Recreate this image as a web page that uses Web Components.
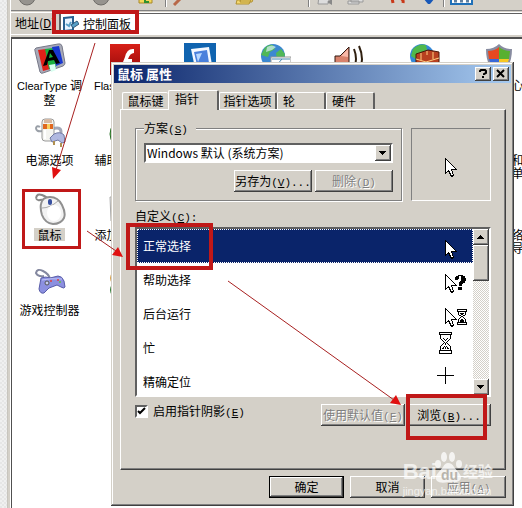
<!DOCTYPE html>
<html lang="zh-CN">
<head>
<meta charset="UTF-8">
<meta name="viewport" content="width=device-width, initial-scale=1">
<title>控制面板</title>
<style>
  body {
    margin: 0;
    background: #d4d0c8;
    color: #000;
    font: 12px/16px "Noto Sans CJK SC", sans-serif;
  }
</style>
</head>
<body>
<control-panel></control-panel>

<script>
const ICONS = {
  cleartype: `<path d="M2 5 24 1q3-1 4 2l3 17q0 2-2 3L9 30q-2 1-3-1L1 8q-1-2 1-3z" fill="#a8aab8" stroke="#777988"/><path d="M4 7l8-1 4 20-7 2z" fill="#e02018"/><path d="M11 6l8-1 3 19-7 2z" fill="#18b040"/><path d="M18 4l7-1 4 17-7 3z" fill="#1838d0"/><path d="M9 23 15 7h4l7 13-4 1-2-4-6 1-1 4zm6-8 4-1-3-4z" fill="#000" fill-rule="evenodd"/><path d="M15 22l6-1 1 6-5 2z" fill="#d8fff0"/>`,
  flash: `<defs><linearGradient id="f" x2="0" y2="1"><stop stop-color="#d82018"/><stop offset="1" stop-color="#900808"/></linearGradient></defs><rect x="1" y="1" width="30" height="31" fill="url(#f)"/><path d="M25 6q-7-1-9 8l-2 5q-2 6-5 6v4q6 0 9-9h5v-4h-4q2-6 6-6z" fill="#fff"/>`,
  display: `<rect y="0" width="32" height="32" fill="#1064b0"/><path d="M7 6l18-2 3 18-17 3z" fill="#f4f8ff"/><path d="M10 9l13-2 2 13-12 2z" fill="#4a80dc"/><path d="M12 11l6-1-4 9z" fill="#b8d8ff"/>`,
  globe: `<circle cx="14" cy="13" r="12" fill="#3c88d0"/><path d="M5 6q4-5 9-4l2 4-5 3-2 5-7-2zM17 10l5-4 4 5-2 8-6-2z" fill="#50b858"/><path d="M8 4q5-3 9 0l-4 3-6 2z" fill="#d8f0f8" opacity=".7"/><rect x="12" y="14" width="20" height="17" fill="#fff" stroke="#999"/><path d="M13 16h18M16 24l7-8" stroke="#4888b0"/>`,
  sound: `<path d="M1 13h5L15 4v26L6 22H1z" fill="#d8826c" stroke="#301810"/><path d="M7 13l7-7v8z" fill="#f8b8a8"/><path d="M20 6q4 10 0 20M25 3q6 13 0 27" fill="none" stroke="#302010" stroke-width="2"/>`,
  firewall: `<circle cx="13" cy="13" r="12" fill="#3488d8"/><path d="M4 6q6-6 13-4l1 5-7 3-3 7-6-4z" fill="#50b84c"/><path d="M7 11 19 7l11 2v18l-14 4-9-3z" fill="#b84020" stroke="#481808"/><path d="M7 16l10 3 13-4M7 22l10 3 13-4M12 10v7m5 2v6m7-16v7m-6-8v4" fill="none" stroke="#ffd080"/>`,
  shield: `<path d="M15 1q5 5 13 5 0 19-13 26Q2 25 2 6q8 0 13-5z" fill="#888ca0"/><path d="M15 4v12H5L4 8q7 0 11-4z" fill="#e84820"/><path d="M15 4q5 4 11 4l-1 8H15z" fill="#58b030"/><path d="M5 16h10v13Q7 24 5 16z" fill="#3868d8"/><path d="M15 16h10q-2 9-10 13z" fill="#f8c820"/>`,
  power: `<path d="M8 13q-6 1-6-3 1-3 4-1" fill="none" stroke="#9aa0a8" stroke-width="2"/><path d="M18 11q9-3 9 3 0 4-4 6" fill="none" stroke="#a4a8b8" stroke-width="3"/><rect x="8" y="1" width="12" height="22" rx="3" fill="#f4f4f0" stroke="#999"/><path d="M9 6h10v5H9z" fill="#e06820"/><path d="M13 6h3v5h-3z" fill="#f8d060"/><path d="M10 2q4-2 8 0v3h-8z" fill="#d8b8a0"/><path d="M11 12v9" stroke="#fff" stroke-width="2"/><path d="M16 20l4-4q6-3 10 1l1 7-3 1-4-3-6 2z" fill="#b0b8e0" stroke="#7078a0"/><path d="M20 23v4m7-2v4" stroke="#b09050" stroke-width="2"/>`,
  mouse: `<path d="M2 5q1-5 6-3t6 4M2 5q1 3 4 2t4 1" fill="none" stroke="#888" stroke-width="2"/><path d="M7 11q1-7 9-7 8 0 12 8 4 8 2 13-3 6-11 6-8-1-11-9-2-7-1-11z" fill="#f2f2f2" stroke="#909090" stroke-width="2"/><path d="M8 15q8 0 16-7" fill="none" stroke="#aaa"/><rect x="14" y="6" width="4" height="6" rx="2" fill="#3850a0"/><ellipse cx="20" cy="20" rx="7" ry="8" fill="#fff"/>`,
  gamepad: `<path d="M10 8Q4 9 2 5q1-5 7-2t7 8" fill="none" stroke="#8488a0" stroke-width="2"/><path d="M7 10q5-2 9 0l8-2q4 0 6 5l1 6q-1 2-4 0l-4-2-8 3-5 5q-4 1-5-4z" fill="#8c90e0" stroke="#585ca8"/><path d="M8 12q8-2 20-1" stroke="#c0c4f8" fill="none"/><circle cx="13" cy="15" r="2" fill="#c8ccf0" stroke="#555"/><circle cx="17" cy="13" r="1" fill="#e04040"/><circle cx="24" cy="12" r="1" fill="#e04040"/><circle cx="26" cy="14" r="1" fill="#60c040"/>`,
  access: `<circle cx="15" cy="16" r="14" fill="#60b050" stroke="#287028"/>`,
  printer: `<path d="M1 4h26v24H2z" fill="#eee" stroke="#aaa"/>`,
  phone: `<circle cx="8" cy="10" r="7" fill="#d8a048"/><circle cx="9" cy="22" r="8" fill="#308038"/>`,
  empty: ''
};

const ARROW = 'M.5 .5v15l3-3 3 6 2-1-2-6h5z';
const CURSORS = {
  normal: `<path transform="translate(8 11)" d="${ARROW}" fill="#fff" stroke="#000"/>`,
  help: `<path transform="translate(8 11)" d="${ARROW}" fill="#fff" stroke="#000"/><path d="M18 17v-3h1v-1h2v-1h5v1h2v2h1v3h-1v2h-2v1h-1v2h-3v-4h1v-1h1v-5h-2v3h-1v1h-2v-1zM21 24h4v3h-4z"/>`,
  work: `<path transform="translate(8 11)" d="${ARROW}" fill="#fff" stroke="#000"/><g transform="translate(20 12)"><path d="M.5 .5h9v2h-1v3l-3 2 3 3v3h1v2h-9v-2h1v-3l3-3-3-2v-3h-1z" fill="#fff" stroke="#000"/><path d="M3 4h4v1H6v1H4V5H3zM4 10h2v1h1v2H3v-2h1zM0 2h10v1H0zM0 13h10v1H0z"/></g>`,
  busy: `<g transform="translate(2 1)"><path d="M.5 .5h12v2h-1v4l-4 4 4 4v4h1v3H.5v-3h1v-4l4-4-4-4v-4h-1z" fill="#fff" stroke="#000"/><path d="M0 2h13v1H0zM0 18h13v1H0zM4 6h1v1h1v1h1V7h1V6h1v1H8v1H7v1H6V8H5V7H4zM6 11h1v2H6zM5 14h1v1H5zM7 14h1v1H7zM4 15h1v1H4zM6 15h1v1H6zM8 15h1v1H8zM3 16h2v1H3zM6 16h1v1H6zM8 16h2v1H8z"/></g>`,
  cross: `<path d="M0 10.500h17M8.500 2v17" stroke="#000"/>`
};

class DeskIcon extends HTMLElement {
  constructor() {
    super();
    this.attachShadow({ mode: 'open' });
  }

  connectedCallback() {
    this.shadowRoot.innerHTML = `
      <style>
        :host { display: block; min-width: 0; }
        a { display: flex; flex-direction: column; align-items: center; gap: 3px; color: inherit; text-decoration: none; text-align: center; line-height: 13px; }
        svg { width: 32px; height: 32px; }
        .label { padding: 0 3px; white-space: nowrap; }
        :host([selected]) .label { background: #d4d0c8; }
        ::slotted(span) { font-family: "Liberation Sans", sans-serif; font-size: 11px; }
      </style>
      <a href="#"><svg viewBox="0 0 32 32" aria-hidden="true">${ICONS[this.getAttribute('icon')]}</svg>
      <span class="label"><slot></slot></span></a>
    `;
  }
}

class ToolStrip extends HTMLElement {
  constructor() {
    super();
    this.attachShadow({ mode: 'open' });
    this.shadowRoot.innerHTML = `
      <style>
        :host { display: block; height: 10px; overflow: hidden; border-bottom: 1px solid #808080; }
        svg { display: block; width: 600px; height: 10px; }
      </style>
      <svg viewBox="0 0 600 10" aria-hidden="true">
        <g fill="#96938e" stroke="#6f6d69"><circle cx="16" cy="-3" r="8"/><circle cx="90" cy="-3" r="8"/></g>
        <path d="M11-2h9v2h-9zM86-2h9v2h-9z" fill="#ddd"/>
        <path d="M128-2h13v5H128z" fill="#f4d858" stroke="#a88828"/><path d="M134-2v4h4" fill="none" stroke="#309030" stroke-width="2"/>
        <path d="M154.500 0v7M297.500 0v7M432.500 0v7" stroke="#808080"/><path d="M155.500 0v7M298.500 0v7M433.500 0v7" stroke="#fff"/>
        <path d="M169-1l-6 6" stroke="#b86848" stroke-width="3"/>
        <path d="M226 0h14l-2 4h-13zM230-3h13l-2 5h-12z" fill="#f4d870" stroke="#b09030"/>
        <path d="M308-4h11l-2 8h-10zM340-3h12v5h-12zM337 1h11v3h-11z" fill="#ddd" stroke="#999"/><path d="M316 2l5-3v6z" fill="#888"/>
        <path d="M381-2l1 5M388-2q5 1 4 5" fill="none" stroke="#c83818" stroke-width="3"/>
        <path d="M412-2h12l-5 6h-2z" fill="#1858b8"/>
        <path d="M440-6h21V4h-21z" fill="#fff" stroke="#2070b8" stroke-width="2"/><path d="M443 1h3m3 0h3m3 0h3" stroke="#6080a0" stroke-width="3"/>
      </svg>
    `;
  }
}

class AddressBar extends HTMLElement {
  constructor() {
    super();
    this.attachShadow({ mode: 'open' });
    this.shadowRoot.innerHTML = `
      <style>
        :host { display: flex; align-items: stretch; height: 21px; margin-top: 1px; padding-left: 4px; border-top: 1px solid #fff; border-bottom: 1px solid #fff; }
        label { width: 44px; line-height: 20px; white-space: nowrap; }
        .field { flex: 1; display: flex; align-items: center; gap: 4px; padding-left: 2px; background: #fff; border-left: 2px solid #606060; border-top: 1px solid #606060; }
        svg { width: 16px; height: 16px; flex: none; }
        input { flex: 1; min-width: 0; border: 0; padding: 0; outline: 0; background: none; font: inherit; color: inherit; }
      </style>
      <label for="addr">地址(<u>D</u>)</label>
      <div class="field">
        <svg viewBox="0 0 16 16" aria-hidden="true"><path d="M1 2 10 1v13l-9 1z" fill="#e8f4ff" stroke="#286090" stroke-width="2"/><path d="M3 8l3 2 2-4" fill="none" stroke="#58a0c8" stroke-width="2"/><path d="M8 9l6-4 2 3-6 4z" fill="#58a0c8" stroke="#305878"/></svg>
        <input id="addr" value="控制面板">
      </div>
    `;
  }
}

class ClassicButton extends HTMLElement {
  constructor() {
    super();
    this.attachShadow({ mode: 'open' });
  }

  connectedCallback() {
    this.shadowRoot.innerHTML = `
      <style>
        :host { display: block; width: 75px; }
        button {
          display: block; width: 100%; height: 22px; padding: 0; border: 0;
          background: #d4d0c8; color: #000; font: inherit; line-height: 20px; white-space: nowrap;
          box-shadow: inset -1px -1px #404040, inset 1px 1px #fff, inset -2px -2px #808080;
        }
        button:disabled { color: #808080; text-shadow: 1px 1px #fff; }
        :host([default]) button { box-shadow: inset 0 0 0 1px #000, inset -2px -2px #404040, inset 2px 2px #fff, inset -3px -3px #808080; }
      </style>
      <button type="button" ${this.hasAttribute('disabled') ? 'disabled' : ''}><slot></slot></button>
    `;
  }
}

class CursorList extends HTMLElement {
  constructor() {
    super();
    this.attachShadow({ mode: 'open' });
    const rows = [['正常选择', 'normal'], ['帮助选择', 'help'], ['后台运行', 'work'], ['忙', 'busy'], ['精确定位', 'cross']];
    this.shadowRoot.innerHTML = `
      <style>
        :host { display: flex; box-sizing: border-box; height: 170px; overflow: hidden; background: #fff; border: 2px solid; border-color: #606060 #fff #fff #606060; }
        ul { flex: 1; margin: 0; padding: 0; list-style: none; }
        li { display: flex; align-items: center; justify-content: space-between; box-sizing: border-box; height: 34px; padding: 0 2px 0 6px; }
        li[aria-selected=true] { background: #0a246a; color: #fff; outline: 1px dotted #fff; outline-offset: -1px; }
        li svg { width: 34px; height: 34px; }
        .scroll { width: 16px; display: flex; flex-direction: column; background: repeating-conic-gradient(#fff 0 25%, #d4d0c8 0 50%) 0 0 / 2px 2px; }
        .scroll button, .thumb { width: 16px; padding: 0; border: 0; background: #d4d0c8; box-shadow: inset -1px -1px #404040, inset 1px 1px #fff, inset -2px -2px #808080; }
        .scroll button { height: 16px; flex: none; }
        .scroll button svg { display: block; width: 16px; height: 16px; }
        .thumb { height: 36px; }
        .down { margin-top: auto; }
      </style>
      <ul role="listbox" aria-label="自定义">
        ${rows.map(([name, cur], i) => `<li role="option" aria-selected="${i === 0}">${name}<svg viewBox="0 0 34 34" shape-rendering="crispEdges" aria-hidden="true">${CURSORS[cur]}</svg></li>`).join('')}
      </ul>
      <div class="scroll">
        <button type="button" aria-label="向上"><svg viewBox="0 0 16 16" shape-rendering="crispEdges"><path d="M4 10h7L7.500 6z"/></svg></button>
        <div class="thumb"></div>
        <button type="button" class="down" aria-label="向下"><svg viewBox="0 0 16 16" shape-rendering="crispEdges"><path d="M4 6h7L7.500 10z"/></svg></button>
      </div>
    `;
  }
}

class MouseDialog extends HTMLElement {
  constructor() {
    super();
    this.attachShadow({ mode: 'open' });
    this.shadowRoot.innerHTML = `
      <style>
        :host { display: block; padding: 3px; background: #d4d0c8; box-shadow: inset -1px -1px #404040, inset 1px 1px #d4d0c8, inset -2px -2px #808080, inset 2px 2px #fff; }
        header { display: flex; align-items: center; gap: 2px; height: 18px; padding: 0 2px; background: linear-gradient(90deg, #0a246a, #a6caf0); color: #fff; }
        h1 { flex: 1; margin: 0; padding-left: 1px; font-size: 13px; line-height: 18px; }
        header button { width: 16px; height: 14px; padding: 0; border: 0; background: #d4d0c8; box-shadow: inset -1px -1px #404040, inset 1px 1px #fff, inset -2px -2px #808080; }
        header svg { display: block; width: 16px; height: 14px; }
        .body { padding: 7px 5px 5px 6px; }
        nav { display: flex; align-items: flex-end; height: 19px; padding-left: 2px; }
        nav button { height: 17px; padding: 0; border: 0; border-top: 1px solid #fff; border-left: 1px solid #fff; border-right: 2px solid #606060; border-radius: 2px 2px 0 0; background: #d4d0c8; color: #000; font: inherit; line-height: 16px; white-space: nowrap; }
        nav .key { width: 46px; border-right: 0; }
        nav .opts { width: 58px; }
        nav .short { width: 49px; }
        nav .wheel { text-align: left; padding-left: 5px; }
        nav .hard { padding-right: 12px; }
        nav button[aria-selected=true] { position: relative; width: 51px; height: 20px; margin-bottom: -1px; padding: 0 12px 3px 0; }
        .page { padding: 10px 14px 43px; border: 1px solid; border-color: #fff #404040 #404040 #fff; box-shadow: inset -1px -1px #808080; }
        .scheme { display: flex; align-items: flex-end; gap: 9px; }
        fieldset { flex: 1; min-width: 0; margin: 0; padding: 7px 8px 8px; border: 1px solid #808080; box-shadow: inset 1px 1px #fff, 1px 1px #fff; }
        legend { height: 16px; padding: 0 8px 0 0; background: #d4d0c8; }
        .k { font: 11px/1 "Liberation Mono", monospace; }
        .combo { position: relative; }
        select { display: block; box-sizing: border-box; width: 100%; height: 20px; padding: 0 20px 0 1px; appearance: none; border: 2px solid; border-color: #606060 #fff #fff #606060; border-radius: 0; background: #fff; color: #000; font: inherit; line-height: 16px; }
        .drop { position: absolute; top: 2px; right: 2px; bottom: 2px; width: 16px; background: #d4d0c8; box-shadow: inset -1px -1px #404040, inset 1px 1px #fff, inset -2px -2px #808080; pointer-events: none; }
        .drop svg { display: block; width: 16px; height: 16px; }
        .pair { display: flex; justify-content: flex-end; gap: 3px; margin-top: 7px; }
        .pair classic-button { width: 78px; }
        .preview { box-sizing: border-box; width: 80px; height: 73px; display: grid; place-items: center; border: 1px solid; border-color: #808080 #fff #fff #808080; }
        .preview svg { width: 12px; height: 20px; padding: 6px 0 0; }
        .caption { margin: 7px 0 3px; }
        .opts-row { display: flex; align-items: flex-start; gap: 2px; margin-top: 7px; }
        .check { flex: 1; display: flex; align-items: center; gap: 5px; line-height: 13px; white-space: nowrap; }
        input { appearance: none; flex: none; width: 13px; height: 13px; margin: 0; border: 2px solid; border-color: #606060 #fff #fff #606060; background: #fff; }
        input:checked { background: #fff url('data:image/svg+xml,<svg xmlns="http://www.w3.org/2000/svg" viewBox="0 0 9 9"><path d="M1 4l2 2 5-5" fill="none" stroke="black" stroke-width="2"/></svg>') center / 9px 9px; }
        .opts-row classic-button { width: 84px; }
        footer { display: flex; justify-content: flex-end; gap: 6px; margin-top: 6px; }
      </style>
      <header>
        <h1>鼠标 属性</h1>
        <button type="button" aria-label="帮助"><svg viewBox="0 0 16 14"><path d="M5 5V4l1-1h4l1 1v2L9 7v1M8 9v2" fill="none" stroke="#000" stroke-width="2"/></svg></button>
        <button type="button" aria-label="关闭"><svg viewBox="0 0 16 14"><path d="M4 3l7 7M11 3l-7 7" stroke="#000" stroke-width="2"/></svg></button>
      </header>
      <div class="body">
        <nav role="tablist">
          <button type="button" role="tab" class="key">鼠标键</button>
          <button type="button" role="tab" aria-selected="true">指针</button>
          <button type="button" role="tab" class="opts">指针选项</button>
          <button type="button" role="tab" class="short wheel">轮</button>
          <button type="button" role="tab" class="short hard">硬件</button>
        </nav>
        <section class="page">
          <div class="scheme">
            <fieldset>
              <legend><label for="scheme">方案<span class="k">(<u>S</u>)</span></label></legend>
              <div class="combo">
                <select id="scheme"><option>Windows 默认 (系统方案)</option></select>
                <span class="drop"><svg viewBox="0 0 16 16" shape-rendering="crispEdges"><path d="M4 6h7L7.500 10z"/></svg></span>
              </div>
              <div class="pair">
                <classic-button>另存为<span class="k">(<u>V</u>)...</span></classic-button>
                <classic-button disabled>删除<span class="k">(<u>D</u>)</span></classic-button>
              </div>
            </fieldset>
            <div class="preview"><svg viewBox="0 0 12 20" shape-rendering="crispEdges"><path d="${ARROW}" fill="#fff" stroke="#000"/></svg></div>
          </div>
          <div class="caption">自定义<span class="k">(<u>C</u>):</span></div>
          <cursor-list></cursor-list>
          <div class="opts-row">
            <label class="check"><input type="checkbox" checked><span>启用指针阴影<span class="k">(<u>E</u>)</span></span></label>
            <classic-button disabled>使用默认值<span class="k">(<u>F</u>)</span></classic-button>
            <classic-button>浏览<span class="k">(<u>B</u>)...</span></classic-button>
          </div>
        </section>
        <footer>
          <classic-button default>确定</classic-button>
          <classic-button>取消</classic-button>
          <classic-button disabled>应用<span class="k">(<u>A</u>)</span></classic-button>
        </footer>
      </div>
    `;
  }
}

class SiteMark extends HTMLElement {
  constructor() {
    super();
    this.attachShadow({ mode: 'open' });
    this.shadowRoot.innerHTML = `
      <style>
        :host { display: block; color: rgba(255, 255, 255, .7); pointer-events: none; }
        .logo { display: flex; align-items: flex-end; height: 32px; font: bold 22px/24px "Liberation Sans", "Noto Sans CJK SC", sans-serif; }
        .paw { position: relative; width: 28px; height: 32px; margin-left: -2px; }
        .paw svg { display: block; width: 28px; height: 32px; }
        .paw span { position: absolute; left: 6px; bottom: 0; color: #b8b4ac; font-size: 14px; line-height: 18px; }
        .name { font-size: 15px; line-height: 24px; }
        .site { font: 11px/14px "Liberation Sans", sans-serif; }
      </style>
      <div class="logo">Bai<div class="paw"><svg viewBox="0 0 28 32" fill="#fff" fill-opacity=".75"><ellipse cx="3" cy="12" rx="3" ry="4"/><ellipse cx="9" cy="5" rx="3" ry="5"/><ellipse cx="17" cy="5" rx="3" ry="5"/><ellipse cx="24" cy="12" rx="3" ry="4"/><path d="M13 11q4 0 6 4l5 6q4 5 0 8-3 2-10 1-9 2-12-1-3-4 1-8l5-6q2-4 5-4z"/></svg><span>du</span></div><span class="name">经验</span></div>
      <div class="site">jingyan.baidu.com</div>
    `;
  }
}

class ControlPanel extends HTMLElement {
  constructor() {
    super();
    this.attachShadow({ mode: 'open' });
    this.shadowRoot.innerHTML = `
      <style>
        :host { display: flex; position: relative; height: 100vh; overflow: hidden; }
        .edge { flex: none; width: 7px; background: repeating-conic-gradient(#e6e6e6 0 25%, #f0f0f0 0 50%) 0 0 / 4px 4px; border-right: 1px solid #c8c5be; }
        .window { flex: 1; min-width: 0; display: flex; flex-direction: column; margin-left: 2px; border-left: 1px solid #fff; }
        .icons { flex: 1; min-height: 0; overflow: hidden; display: grid; grid-template-columns: repeat(7, 75px); grid-auto-rows: 75px; align-content: start; margin-top: 2px; padding-top: 4px; background: #fff; border-left: 1px solid #505050; border-top: 2px solid #505050; }
        .last { grid-column: 7; }
        mouse-dialog { position: absolute; left: 111px; right: 8px; top: 62px; }
        site-mark { position: absolute; right: 29px; top: 452px; }
        .marks { position: absolute; left: 0; top: 0; width: 522px; height: 508px; pointer-events: none; }
      </style>
      <div class="edge"></div>
      <main class="window">
        <tool-strip></tool-strip>
        <address-bar></address-bar>
        <div class="icons">
          <desk-icon icon="cleartype"><span>ClearType</span> 调<br>整</desk-icon>
          <desk-icon icon="flash"><span>Flash Player</span></desk-icon>
          <desk-icon icon="display"></desk-icon>
          <desk-icon icon="globe"></desk-icon>
          <desk-icon icon="sound"></desk-icon>
          <desk-icon icon="firewall"></desk-icon>
          <desk-icon icon="shield">安全中心</desk-icon>
          <desk-icon icon="power">电源选项</desk-icon>
          <desk-icon icon="access">辅助功能选<br>项</desk-icon>
          <desk-icon icon="empty" class="last">任务栏和<br>开始菜单</desk-icon>
          <desk-icon icon="mouse" selected>鼠标</desk-icon>
          <desk-icon icon="printer">添加或删除<br>程序</desk-icon>
          <desk-icon icon="empty" class="last">无线网络<br>安装向导</desk-icon>
          <desk-icon icon="gamepad">游戏控制器</desk-icon>
          <desk-icon icon="phone"></desk-icon>
        </div>
      </main>
      <mouse-dialog></mouse-dialog>
      <svg class="marks" viewBox="0 0 522 508" aria-hidden="true">
        <g fill="none" stroke="#c01818" stroke-width="4"><path d="M54 12h83v20H54z"/><path d="M128 225h83v43h-83z"/><path d="M408 396h77v42h-77z"/><path d="M23.500 190.500h56v57h-56z" stroke-width="3"/></g>
        <path d="M95 43 56 170M87 231l29 20M228 281l166 119" stroke="#a82020" fill="none"/>
        <path d="M53 179l-1-12 9 3zM123 257l-11-2 6-8zM401 405l-11-2 6-8z" fill="#e01010"/>
      </svg>
      <site-mark></site-mark>
    `;
  }
}

customElements.define('desk-icon', DeskIcon);
customElements.define('tool-strip', ToolStrip);
customElements.define('address-bar', AddressBar);
customElements.define('classic-button', ClassicButton);
customElements.define('cursor-list', CursorList);
customElements.define('mouse-dialog', MouseDialog);
customElements.define('site-mark', SiteMark);
customElements.define('control-panel', ControlPanel);
</script>
</body>
</html>
